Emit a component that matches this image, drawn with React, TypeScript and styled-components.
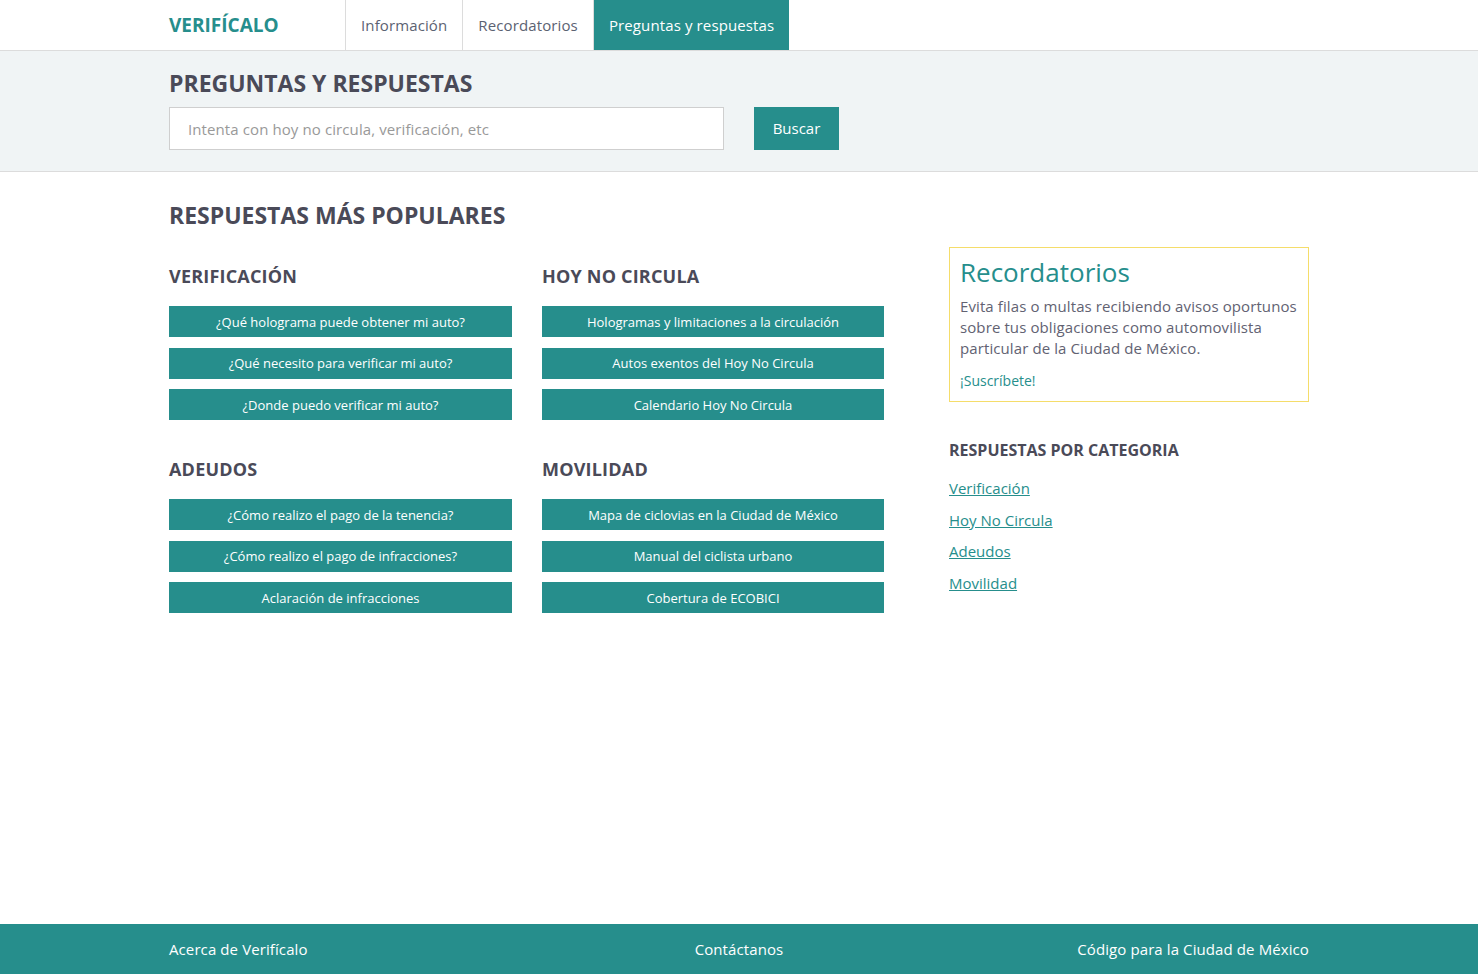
import React from "react";
import styled, { createGlobalStyle } from "styled-components";

const TEAL = "#268e8c";
const DARK = "#4a4a58";

const Global = createGlobalStyle`
  html, body { margin: 0; padding: 0; }
  body { font-family: "Open Sans", "Noto Sans", sans-serif; color: ${DARK}; background: #fff; }
  * { box-sizing: border-box; }
`;

const Page = styled.div`
  min-height: 100vh;
  display: flex;
  flex-direction: column;
`;

const Container = styled.div`
  width: 1140px;
  margin: 0 auto;
`;

const NavBar = styled.header`
  height: 51px;
  border-bottom: 1px solid #dcdcdc;
  background: #fff;
`;

const NavInner = styled(Container)`
  display: flex;
  align-items: stretch;
  height: 50px;
`;

const Logo = styled.a`
  width: 176px;
  display: flex;
  align-items: center;
  font-size: 19px;
  font-weight: 700;
  color: ${TEAL};
  text-decoration: none;
`;

const NavItem = styled.a<{ $active?: boolean }>`
  display: flex;
  align-items: center;
  padding: 0 15px;
  font-size: 15px;
  letter-spacing: 0.12px;
  color: ${(p) => (p.$active ? "#fff" : "#5b6272")};
  background: ${(p) => (p.$active ? TEAL : "transparent")};
  border-left: 1px solid #dcdcdc;
  text-decoration: none;
`;

const Band = styled.section`
  background: #f0f4f5;
  border-bottom: 1px solid #dcdcdc;
  height: 121px;
`;

const BandInner = styled(Container)`
  padding-top: 18px;
`;

const H1 = styled.h1`
  margin: 0 0 10px;
  font-size: 23px;
  line-height: 28px;
  font-weight: 700;
  color: ${DARK};
`;

const SearchRow = styled.form`
  display: flex;
  gap: 30px;
`;

const Input = styled.input`
  width: 555px;
  height: 43px;
  border: 1px solid #cfcfcf;
  padding: 0 18px;
  font-family: "Open Sans", sans-serif;
  font-size: 15px;
  letter-spacing: 0.1px;
  color: #333;
  background: #fff;
  outline: none;
  &::placeholder { color: #999; }
`;

const Button = styled.button`
  width: 85px;
  height: 43px;
  border: 0;
  padding: 0 0 2px;
  background: ${TEAL};
  color: #fff;
  font-family: "Open Sans", sans-serif;
  font-size: 15px;
`;

const Main = styled(Container)`
  flex: 1;
  padding-top: 28px;
`;

const Layout = styled.div`
  display: grid;
  grid-template-columns: 715px 360px;
  column-gap: 65px;
`;

const H2 = styled.h2`
  margin: 0 0 28px;
  font-size: 23px;
  line-height: 30px;
  font-weight: 700;
  color: ${DARK};
`;

const Topics = styled.div`
  display: grid;
  grid-template-columns: 343px 342px;
  column-gap: 30px;
  row-gap: 31px;
`;

const Topic = styled.div`
  display: flex;
  flex-direction: column;
`;

const H3 = styled.h3`
  margin: 7px 0 19px;
  font-size: 18px;
  line-height: 22px;
  font-weight: 700;
  letter-spacing: 0.2px;
  color: ${DARK};
`;

const AnswerList = styled.div`
  display: flex;
  flex-direction: column;
  gap: 10.5px;
`;

const Answer = styled.a`
  display: flex;
  align-items: center;
  justify-content: center;
  height: 31px;
  background: ${TEAL};
  color: #fff;
  font-size: 13px;
  text-decoration: none;
`;

const Side = styled.aside`
  padding-top: 47px;
`;

const Card = styled.div`
  border: 1px solid #f5dd6a;
  padding: 8px 10px 10px;
`;

const CardTitle = styled.div`
  font-size: 26px;
  line-height: 32px;
  color: ${TEAL};
  margin-bottom: 8px;
`;

const CardText = styled.p`
  margin: 0 0 10px;
  font-size: 15px;
  line-height: 21px;
  letter-spacing: 0.1px;
  color: #626272;
`;

const CardLink = styled.a`
  font-size: 14px;
  color: ${TEAL};
  text-decoration: none;
`;

const H4 = styled.h4`
  margin: 37px 0 17px;
  font-size: 16px;
  line-height: 22px;
  font-weight: 700;
  color: ${DARK};
`;

const CatList = styled.div`
  display: flex;
  flex-direction: column;
  gap: 10px;
`;

const CatLink = styled.a`
  font-size: 15px;
  line-height: 21.5px;
  color: ${TEAL};
  text-decoration: underline;
  align-self: flex-start;
`;

const Footer = styled.footer`
  background: ${TEAL};
  height: 50px;
`;

const FooterInner = styled(Container)`
  height: 50px;
  display: grid;
  grid-template-columns: 1fr 1fr 1fr;
  align-items: center;
`;

const FootLink = styled.a<{ $align: "left" | "center" | "right" }>`
  font-size: 15px;
  letter-spacing: 0.1px;
  color: #fff;
  text-decoration: none;
  text-align: ${(p) => p.$align};
`;

const topics = [
  {
    title: "VERIFICACIÓN",
    items: [
      "¿Qué holograma puede obtener mi auto?",
      "¿Qué necesito para verificar mi auto?",
      "¿Donde puedo verificar mi auto?",
    ],
  },
  {
    title: "HOY NO CIRCULA",
    items: [
      "Hologramas y limitaciones a la circulación",
      "Autos exentos del Hoy No Circula",
      "Calendario Hoy No Circula",
    ],
  },
  {
    title: "ADEUDOS",
    items: [
      "¿Cómo realizo el pago de la tenencia?",
      "¿Cómo realizo el pago de infracciones?",
      "Aclaración de infracciones",
    ],
  },
  {
    title: "MOVILIDAD",
    items: [
      "Mapa de ciclovias en la Ciudad de México",
      "Manual del ciclista urbano",
      "Cobertura de ECOBICI",
    ],
  },
];

export default function App() {
  return (
    <Page>
      <Global />
      <NavBar>
        <NavInner>
          <Logo href="#">VERIFÍCALO</Logo>
          <NavItem href="#">Información</NavItem>
          <NavItem href="#">Recordatorios</NavItem>
          <NavItem href="#" $active>Preguntas y respuestas</NavItem>
        </NavInner>
      </NavBar>
      <Band>
        <BandInner>
          <H1>PREGUNTAS Y RESPUESTAS</H1>
          <SearchRow onSubmit={(e) => e.preventDefault()}>
            <Input placeholder="Intenta con hoy no circula, verificación, etc" />
            <Button type="submit">Buscar</Button>
          </SearchRow>
        </BandInner>
      </Band>
      <Main>
        <Layout>
          <div>
            <H2>RESPUESTAS MÁS POPULARES</H2>
            <Topics>
              {topics.map((t) => (
                <Topic key={t.title}>
                  <H3>{t.title}</H3>
                  <AnswerList>
                    {t.items.map((i) => (
                      <Answer href="#" key={i}>{i}</Answer>
                    ))}
                  </AnswerList>
                </Topic>
              ))}
            </Topics>
          </div>
          <Side>
            <Card>
              <CardTitle>Recordatorios</CardTitle>
              <CardText>
                Evita filas o multas recibiendo avisos oportunos sobre tus obligaciones como
                automovilista particular de la Ciudad de México.
              </CardText>
              <CardLink href="#">¡Suscríbete!</CardLink>
            </Card>
            <H4>RESPUESTAS POR CATEGORIA</H4>
            <CatList>
              <CatLink href="#">Verificación</CatLink>
              <CatLink href="#">Hoy No Circula</CatLink>
              <CatLink href="#">Adeudos</CatLink>
              <CatLink href="#">Movilidad</CatLink>
            </CatList>
          </Side>
        </Layout>
      </Main>
      <Footer>
        <FooterInner>
          <FootLink href="#" $align="left">Acerca de Verifícalo</FootLink>
          <FootLink href="#" $align="center">Contáctanos</FootLink>
          <FootLink href="#" $align="right">Código para la Ciudad de México</FootLink>
        </FooterInner>
      </Footer>
    </Page>
  );
}
